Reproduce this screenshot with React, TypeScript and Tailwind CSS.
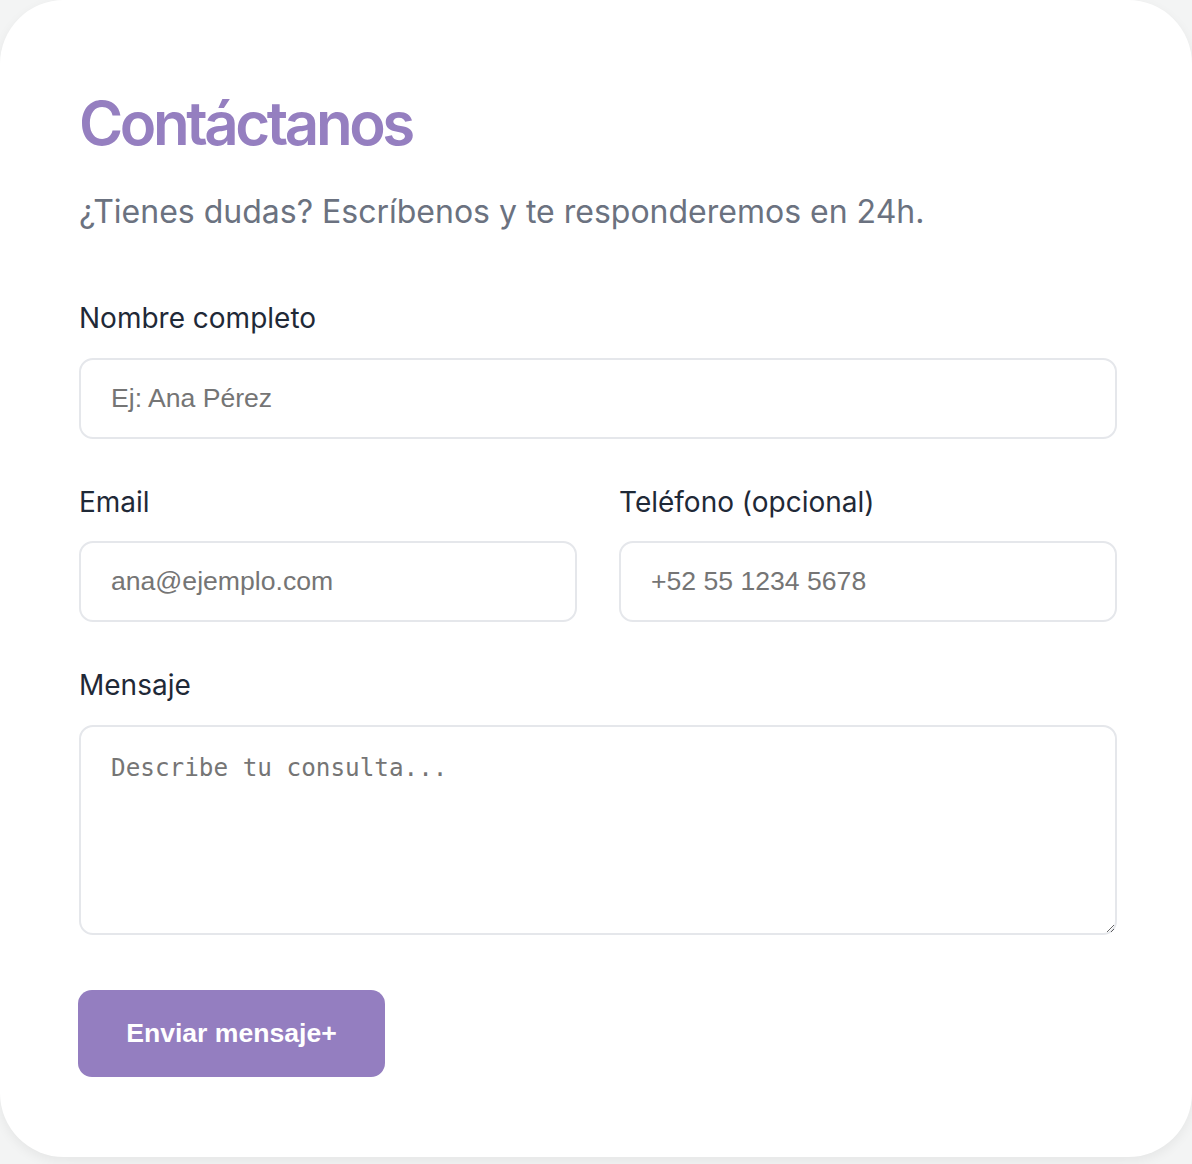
export default function App() {
  const inputCls =
    "h-[81px] w-full rounded-[14px] border-2 border-[#e5e7eb] px-[30px] font-['Liberation_Sans',Arial,sans-serif] text-[26.6px] text-[#1f2937] placeholder:text-[#757575] outline-none";

  return (
    <div className="min-h-screen bg-[#f3f4f4] font-['Inter',sans-serif]">
      <div className="rounded-[64px] bg-white pl-[79px] pr-[75px] pt-[87px] pb-[80px] shadow-[0_4px_12px_rgba(0,0,0,0.06)]">
        <h1 className="text-[60px] font-semibold leading-[72px] tracking-[-0.057em] text-[#957fc0]">Contáctanos</h1>
        <p className="mt-[29px] text-[32px] leading-[48px] text-[#6b7280]">
          ¿Tienes dudas? Escríbenos y te responderemos en 24h.
        </p>

        <form className="mt-[65px] flex flex-col gap-[46px]" onSubmit={(e) => e.preventDefault()}>
          <div className="flex flex-col gap-[23px]">
            <label className="text-[28px] leading-[34px] text-[#1f2937]">Nombre completo</label>
            <input className={inputCls} placeholder="Ej: Ana Pérez" />
          </div>

          <div className="grid grid-cols-2 gap-[42px]">
            <div className="flex flex-col gap-[22px]">
              <label className="text-[28px] leading-[34px] text-[#1f2937]">Email</label>
              <input className={inputCls} placeholder="ana@ejemplo.com" />
            </div>
            <div className="flex flex-col gap-[22px]">
              <label className="text-[28px] leading-[34px] text-[#1f2937]">Teléfono (opcional)</label>
              <input className={inputCls} placeholder="+52 55 1234 5678" />
            </div>
          </div>

          <div className="flex flex-col gap-[23px]">
            <label className="text-[28px] leading-[34px] text-[#1f2937]">Mensaje</label>
            <textarea
              className="h-[210px] w-full resize-y rounded-[14px] border-2 border-[#e5e7eb] px-[30px] py-[25px] font-['DejaVu_Sans_Mono',monospace] text-[24.3px] leading-[32px] text-[#1f2937] placeholder:text-[#757575] outline-none"
              placeholder="Describe tu consulta..."
            />
          </div>

          <div className="mt-[9px]">
            <button
              type="submit"
              className="-ml-px h-[87px] w-[307px] rounded-[14px] bg-[#947ec0] font-['Liberation_Sans',Arial,sans-serif] text-[26.6px] font-bold text-white"
            >
              Enviar mensaje+
            </button>
          </div>
        </form>
      </div>
    </div>
  );
}
